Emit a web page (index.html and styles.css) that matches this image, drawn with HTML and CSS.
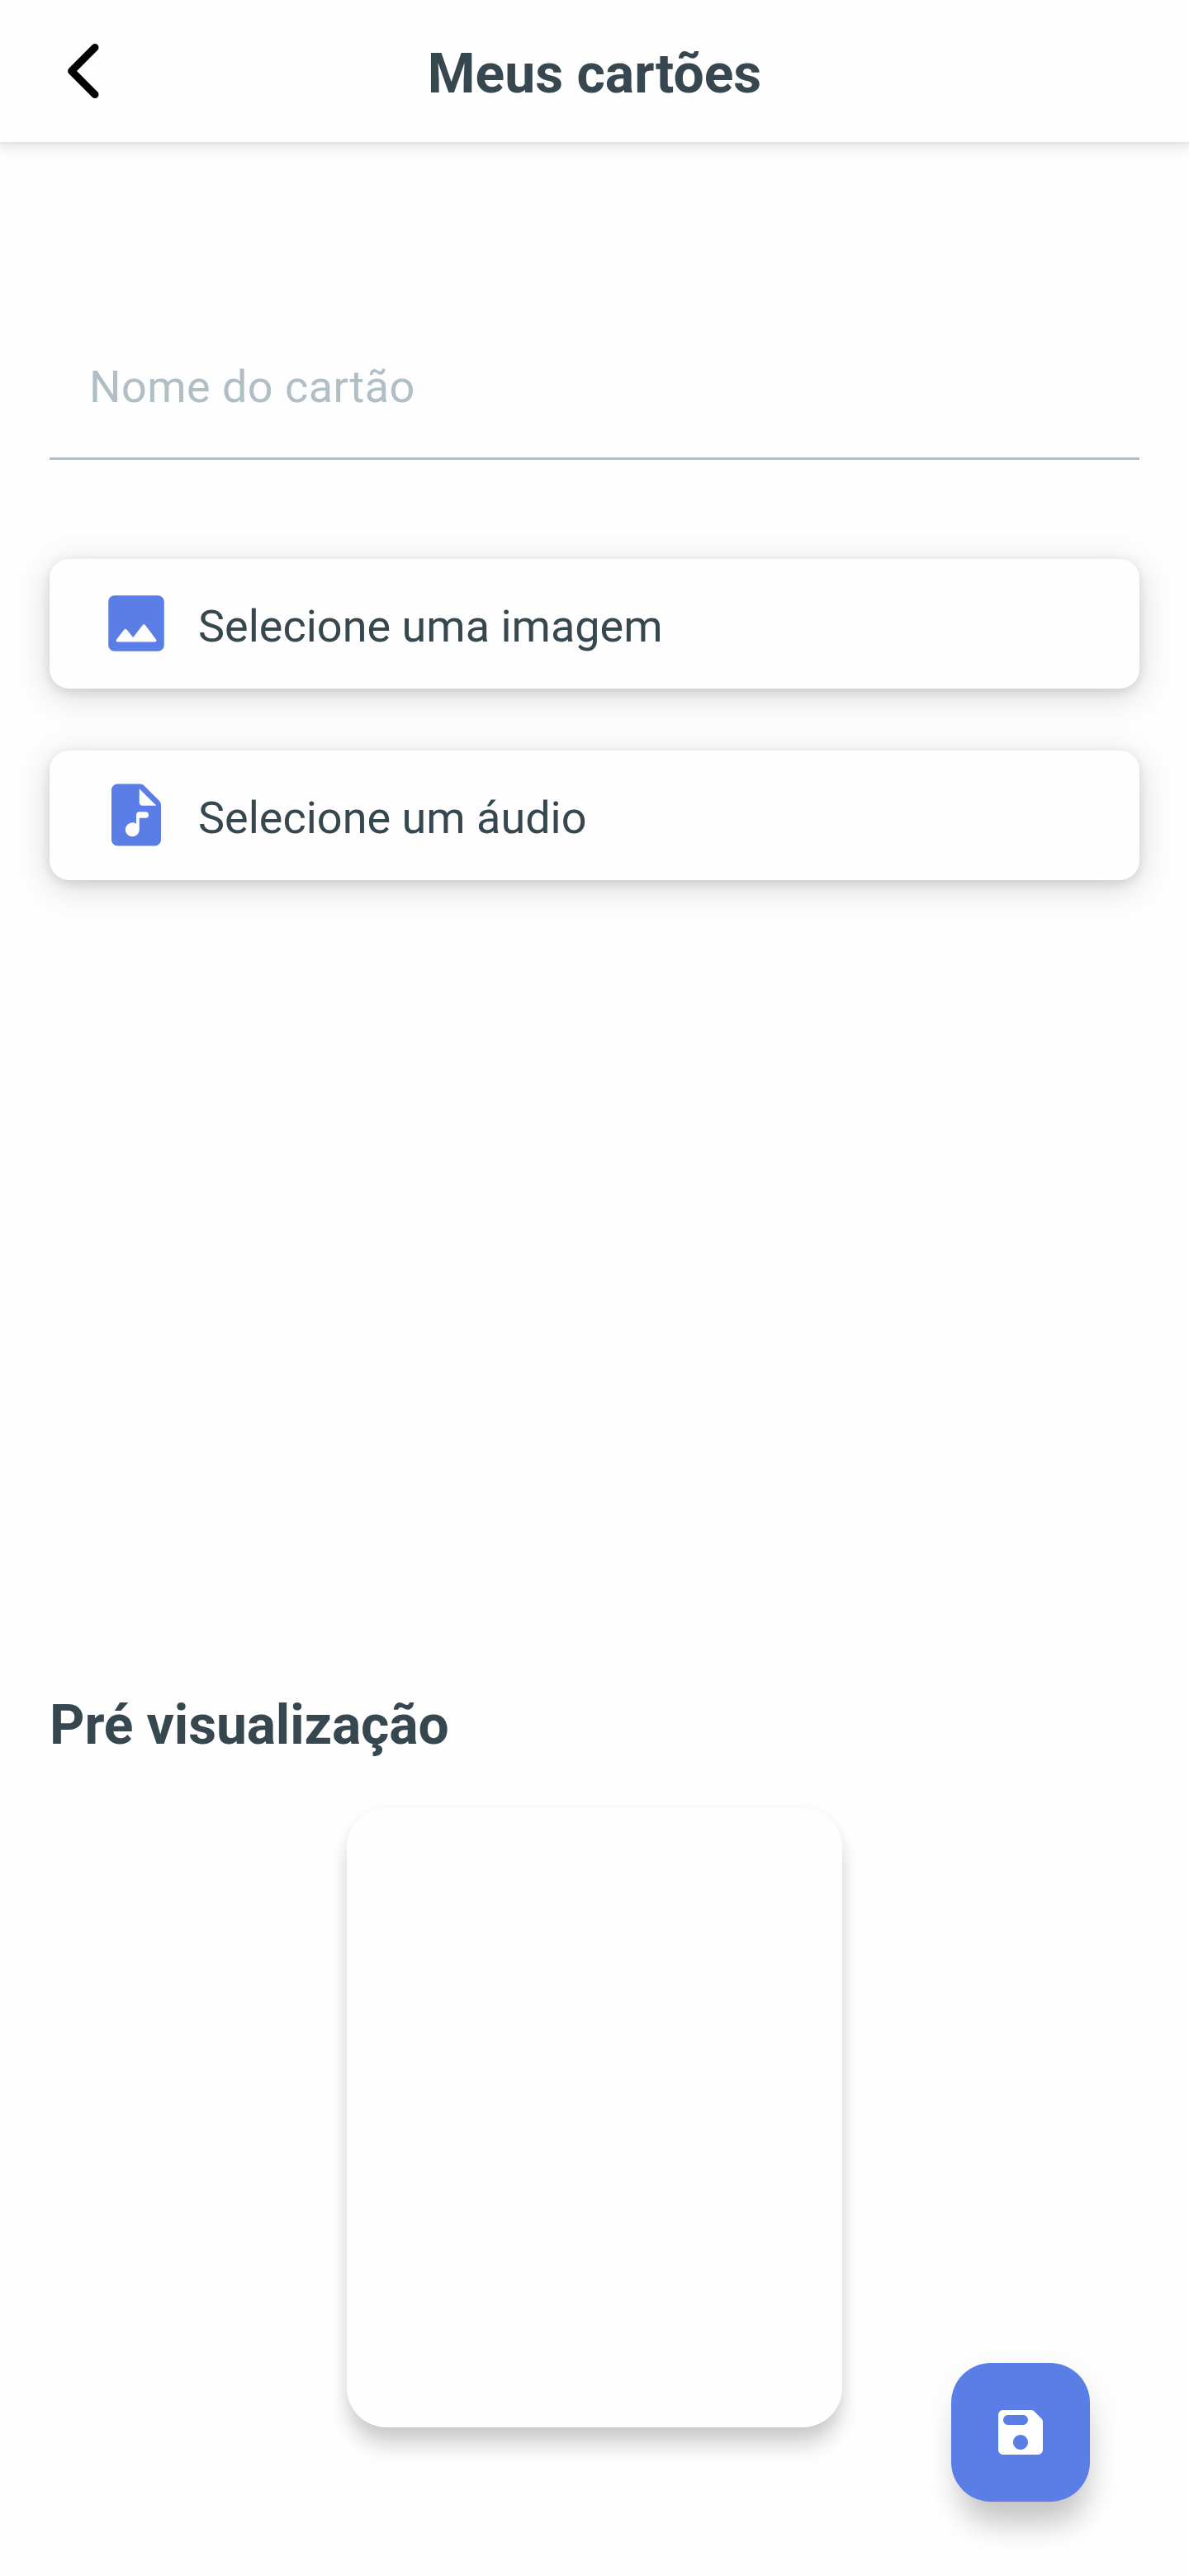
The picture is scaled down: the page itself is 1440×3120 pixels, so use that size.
FILE: index.html
```html
<!DOCTYPE html>
<html lang="pt-BR">
<head>
<meta charset="utf-8">
<title>Meus cartões</title>
<link rel="stylesheet" href="styles.css">
</head>
<body>
<div class="screen">
  <header class="header">
    <button class="back" aria-label="Voltar">
      <svg width="48" height="72" viewBox="0 0 48 72"><path d="M39 7.5 10.6 36 39 64.5" fill="none" stroke="#000" stroke-width="9" stroke-linecap="round" stroke-linejoin="round"/></svg>
    </button>
    <h1 class="title">Meus cartões</h1>
  </header>
  <main class="content">
    <input class="name-input" type="text" placeholder="Nome do cartão">
    <div class="options">
      <button class="option">
        <svg class="option-icon" viewBox="0 0 24 24"><path d="M21 19V5c0-1.100-.9-2-2-2H5c-1.100 0-2 .9-2 2v14c0 1.100.9 2 2 2h14c1.100 0 2-.9 2-2zM8.900 13.980l2.100 2.530 3.100-3.990c.2-.26.6-.26.8.01l3.510 4.680c.25.33.01.8-.4.8H6.020c-.42 0-.65-.48-.39-.81L8.120 14c.19-.26.57-.27.78-.02z"/></svg>
        <span>Selecione uma imagem</span>
      </button>
      <button class="option">
        <svg class="option-icon" viewBox="0 0 24 24"><path fill-rule="evenodd" d="M14.590 2.590C14.210 2.210 13.700 2 13.170 2H6c-1.100 0-2 .9-2 2v16c0 1.100.9 2 2 2h12c1.100 0 2-.9 2-2V8.830c0-.53-.21-1.040-.59-1.410zM13 8V3.500L18.500 9H14c-.55 0-1-.45-1-1zM15 13h-2v3.750a2.250 2.250 0 1 1-1-1.870V12c0-.55.45-1 1-1h2a1 1 0 0 1 0 2z"/></svg>
        <span>Selecione um áudio</span>
      </button>
    </div>
    <section class="preview">
      <h2 class="preview-title">Pré visualização</h2>
      <div class="preview-card"></div>
    </section>
  </main>
  <button class="save" aria-label="Salvar">
    <svg class="save-icon" viewBox="0 0 24 24"><path d="M17.590 3.590c-.38-.38-.89-.59-1.420-.59H5c-1.110 0-2 .9-2 2v14c0 1.100.9 2 2 2h14c1.100 0 2-.9 2-2V7.830c0-.53-.21-1.040-.59-1.410l-2.820-2.830zM12 19c-1.660 0-3-1.340-3-3s1.340-3 3-3 3 1.340 3 3-1.340 3-3 3zm1-10H7c-1.100 0-2-.9-2-2s.9-2 2-2h6c1.100 0 2 .9 2 2s-.9 2-2 2z"/></svg>
  </button>
</div>
</body>
</html>
```
FILE: styles.css
```css
* { box-sizing: border-box; }
body { margin: 0; background: #fefefe; }
button, input { font: inherit; color: inherit; border: 0; padding: 0; margin: 0; background: none; outline: none; }
.screen {
  position: relative;
  display: flex;
  flex-direction: column;
  width: 1440px;
  height: 3120px;
  overflow: hidden;
  background: #fefefe;
  color: #37474f;
  font-family: Roboto, sans-serif;
}
.header {
  display: grid;
  grid-template-columns: 144px 1fr 144px;
  align-items: center;
  height: 172px;
  background: #fefefe;
  box-shadow: 0 3px 18px 4px rgba(0, 0, 0, .09), 0 1px 5px 2px rgba(0, 0, 0, .05);
}
.back { display: flex; padding-left: 76px; }
.title {
  margin: 7px 0 0;
  font-size: 66px;
  line-height: 77px;
  font-weight: 700;
  text-align: center;
}
.content {
  flex: 1;
  display: flex;
  flex-direction: column;
  padding: 212px 60px 0;
}
.name-input {
  height: 173px;
  padding: 0 48px 1px;
  border-bottom: 3px solid #b0bec5;
  font-size: 54px;
  letter-spacing: .45px;
}
.name-input::placeholder { color: #b0bec5; opacity: 1; }
.options { display: flex; flex-direction: column; gap: 75px; margin-top: 120px; }
.option {
  display: flex;
  align-items: center;
  gap: 30px;
  height: 157px;
  padding: 0 60px 1px;
  border-radius: 24px;
  background: #fefefe;
  box-shadow: 0 9px 45px rgba(0, 0, 0, .15), 0 4px 14px rgba(0, 0, 0, .11);
  font-size: 54px;
  line-height: 63px;
}
.option span { padding-top: 7px; }
.option-icon { width: 90px; height: 90px; fill: #5a7de6; }
.preview { display: flex; flex-direction: column; margin-top: 985px; }
.preview-title { margin: 0; font-size: 66px; line-height: 77px; font-weight: 700; letter-spacing: -.15px; }
.preview-card {
  align-self: center;
  width: 600px;
  height: 750px;
  margin-top: 62px;
  border-radius: 48px;
  background: #fefefe;
  box-shadow: 0 24px 26px -3px rgba(0, 0, 0, .18), 0 4px 18px rgba(0, 0, 0, .06);
}
.save {
  position: absolute;
  right: 120px;
  bottom: 90px;
  display: flex;
  align-items: center;
  justify-content: center;
  width: 168px;
  height: 168px;
  border-radius: 48px;
  background: #5a7de6;
  box-shadow: 3px 38px 36px -10px rgba(0, 0, 0, .18), 4px 14px 40px rgba(0, 0, 0, .08);
}
.save-icon { width: 72px; height: 72px; fill: #fff; }
```
